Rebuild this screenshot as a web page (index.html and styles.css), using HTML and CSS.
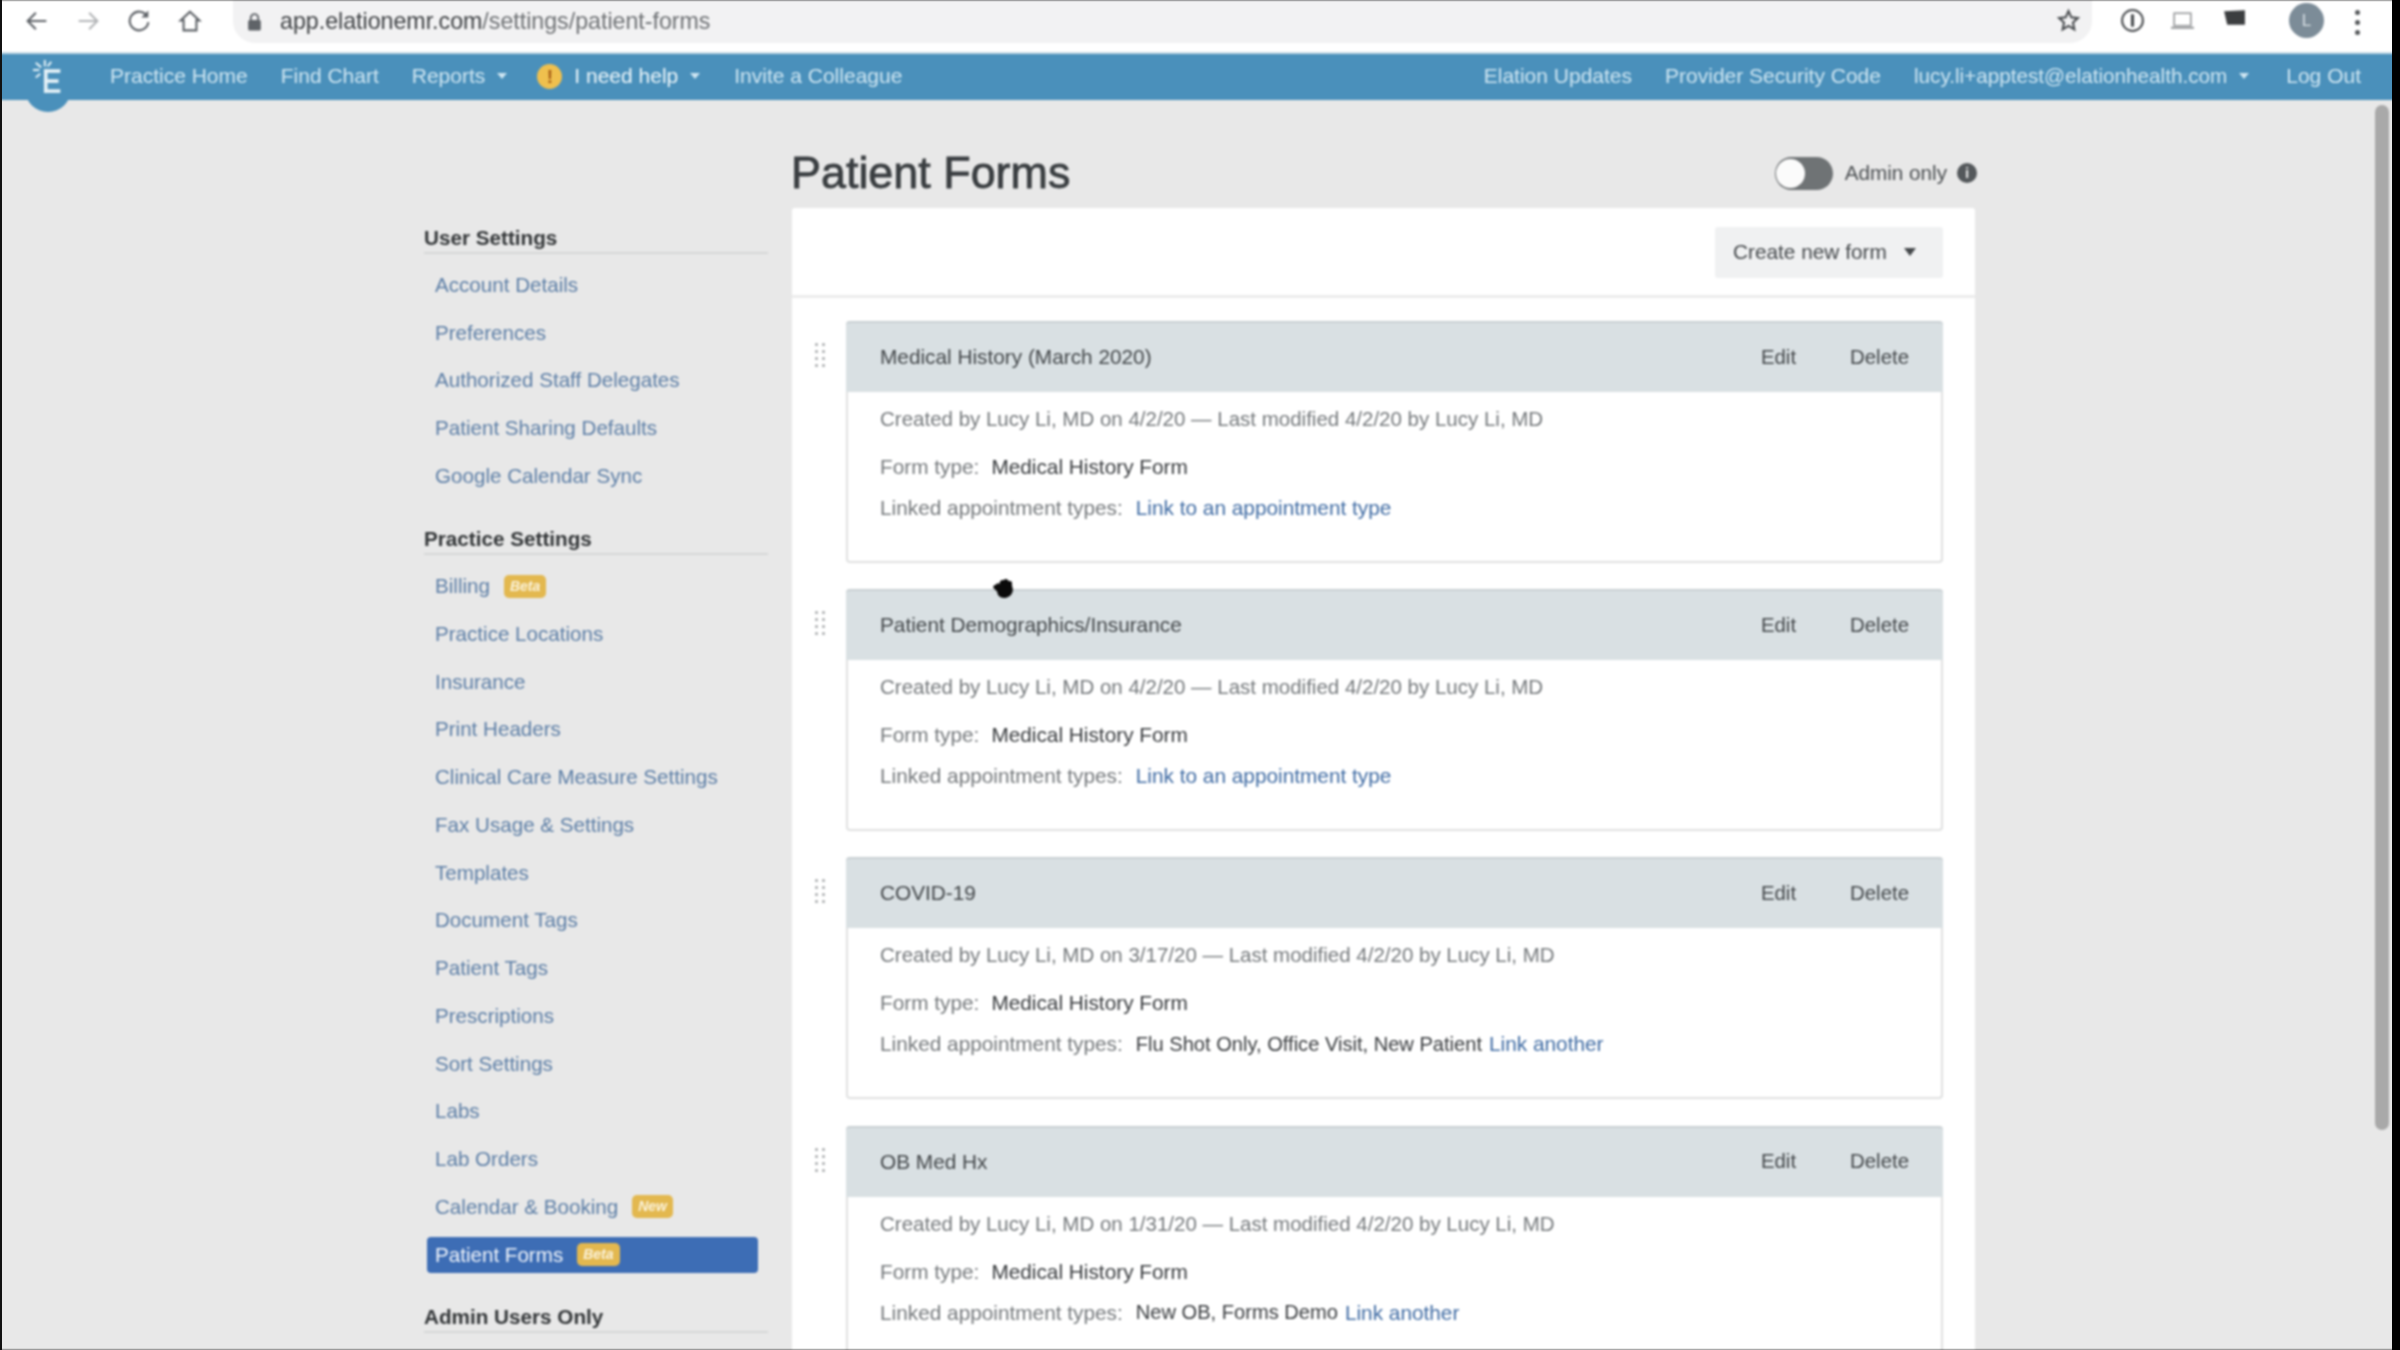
FILE: index.html
```html
<!DOCTYPE html>
<html lang="en">
<head>
<meta charset="utf-8">
<title>Patient Forms</title>
<link rel="stylesheet" href="styles.css">
</head>
<body>
<div class="screen">
  <header class="toolbar">
    <div class="tb-nav">
      <svg class="tb-ico" viewBox="0 0 24 24"><path d="M20 12H5M11 5l-7 7 7 7" fill="none" stroke="#5f6368" stroke-width="1.800"/></svg>
      <svg class="tb-ico" viewBox="0 0 24 24"><path d="M4 12h15M13 5l7 7-7 7" fill="none" stroke="#b4b6b8" stroke-width="1.800"/></svg>
      <svg class="tb-ico" viewBox="0 0 24 24"><path d="M19 8a8 8 0 1 0 1 5" fill="none" stroke="#5f6368" stroke-width="1.800"/><path d="M20 3v6h-6z" fill="#5f6368"/></svg>
      <svg class="tb-ico" viewBox="0 0 24 24"><path d="M12 4l8 7.500h-2.500V20h-11v-8.500H4z" fill="none" stroke="#5f6368" stroke-width="1.800"/></svg>
    </div>
    <div class="omnibox">
      <svg class="lock" viewBox="0 0 14 18"><path d="M3.500 8V5.500a3.500 3.500 0 0 1 7 0V8" fill="none" stroke="#5f6368" stroke-width="1.800"/><rect x="1" y="7.500" width="12" height="10" rx="1.500" fill="#5f6368"/></svg>
      <span class="host">app.elationemr.com</span><span class="path">/settings/patient-forms</span>
    </div>
    <div class="tb-right">
      <svg class="ext star" viewBox="0 0 24 24"><path d="M12 3l2.700 6 6.300.7-4.700 4.300 1.300 6.500L12 17.200 6.400 20.500 7.700 14 3 9.700 9.300 9z" fill="none" stroke="#4a4d50" stroke-width="2"/></svg>
      <svg class="ext onep" viewBox="0 0 24 24"><circle cx="12" cy="12" r="10" fill="none" stroke="#4a4d50" stroke-width="2"/><rect x="10.500" y="6" width="3" height="12" rx="1" fill="#4a4d50"/></svg>
      <svg class="ext laptop" viewBox="0 0 24 24"><rect x="4" y="5" width="16" height="12" fill="none" stroke="#9a9c9e" stroke-width="1.600"/><rect x="1" y="18" width="22" height="2" fill="#9a9c9e"/></svg>
      <svg class="ext wallet" viewBox="0 0 24 24"><path d="M2 5l20-1v14H5z" fill="#3c3e40"/></svg>
      <span class="avatar">L</span>
      <span class="dots"><i></i><i></i><i></i></span>
    </div>
  </header>

  <nav class="navbar">
    <span class="logo-bump"></span>
    <svg class="logo" viewBox="0 0 34 40">
      <g stroke="#e4f1f7" stroke-width="2.200"><path d="M13 2v7M3 5l6 5M0 13h7M3 21l5-4M20 4l-4 5"/></g>
      <g fill="#e4f1f7"><rect x="12" y="12" width="4" height="26"/><rect x="12" y="12" width="18" height="4"/><rect x="12" y="23" width="16" height="4"/><rect x="12" y="34" width="18" height="4"/></g>
    </svg>
    <div class="nav-left">
      <a class="nav-link">Practice Home</a>
      <a class="nav-link">Find Chart</a>
      <a class="nav-link">Reports<span class="caret"></span></a>
      <a class="nav-link help"><span class="alert">!</span>I need help<span class="caret"></span></a>
      <a class="nav-link">Invite a Colleague</a>
    </div>
    <div class="nav-right">
      <a class="nav-link">Elation Updates</a>
      <a class="nav-link">Provider Security Code</a>
      <a class="nav-link email">lucy.li+apptest@elationhealth.com<span class="caret"></span></a>
      <a class="nav-link">Log Out</a>
    </div>
  </nav>

  <main class="main">
    <aside class="sidebar">
      <h3 class="side-head">User Settings</h3>
      <ul class="side-list">
        <li><a>Account Details</a></li>
        <li><a>Preferences</a></li>
        <li><a>Authorized Staff Delegates</a></li>
        <li><a>Patient Sharing Defaults</a></li>
        <li><a>Google Calendar Sync</a></li>
      </ul>
      <h3 class="side-head">Practice Settings</h3>
      <ul class="side-list practice">
        <li><a>Billing</a><span class="badge">Beta</span></li>
        <li><a>Practice Locations</a></li>
        <li><a>Insurance</a></li>
        <li><a>Print Headers</a></li>
        <li><a>Clinical Care Measure Settings</a></li>
        <li><a>Fax Usage &amp; Settings</a></li>
        <li><a>Templates</a></li>
        <li><a>Document Tags</a></li>
        <li><a>Patient Tags</a></li>
        <li><a>Prescriptions</a></li>
        <li><a>Sort Settings</a></li>
        <li><a>Labs</a></li>
        <li><a>Lab Orders</a></li>
        <li><a>Calendar &amp; Booking</a><span class="badge">New</span></li>
        <li class="active"><a>Patient Forms</a><span class="badge">Beta</span></li>
      </ul>
      <h3 class="side-head">Admin Users Only</h3>
    </aside>

    <section class="content">
      <div class="title-row">
        <h1 class="title">Patient Forms</h1>
        <div class="admin">
          <span class="toggle"><span class="knob"></span></span>
          <span class="admin-label">Admin only</span>
          <span class="info">i</span>
        </div>
      </div>
      <div class="panel">
        <div class="panel-top">
          <button class="create">Create new form<span class="caret dark"></span></button>
        </div>
        <div class="cards">
          <div class="row">
            <span class="grip"><i></i><i></i><i></i><i></i><i></i><i></i><i></i><i></i></span>
            <article class="card">
              <div class="card-head"><span class="card-name">Medical History (March 2020)</span><a class="act edit">Edit</a><a class="act">Delete</a></div>
              <div class="card-body">
                <p class="meta">Created by Lucy Li, MD on 4/2/20 — Last modified 4/2/20 by Lucy Li, MD</p>
                <p class="line one"><span class="lbl">Form type:</span><span class="val">Medical History Form</span></p>
                <p class="line"><span class="lbl">Linked appointment types:</span><a class="lnk">Link to an appointment type</a></p>
              </div>
            </article>
          </div>
          <div class="row">
            <span class="grip"><i></i><i></i><i></i><i></i><i></i><i></i><i></i><i></i></span>
            <article class="card">
              <div class="card-head"><span class="card-name">Patient Demographics/Insurance</span><a class="act edit">Edit</a><a class="act">Delete</a></div>
              <div class="card-body">
                <p class="meta">Created by Lucy Li, MD on 4/2/20 — Last modified 4/2/20 by Lucy Li, MD</p>
                <p class="line one"><span class="lbl">Form type:</span><span class="val">Medical History Form</span></p>
                <p class="line"><span class="lbl">Linked appointment types:</span><a class="lnk">Link to an appointment type</a></p>
              </div>
            </article>
          </div>
          <div class="row">
            <span class="grip"><i></i><i></i><i></i><i></i><i></i><i></i><i></i><i></i></span>
            <article class="card">
              <div class="card-head"><span class="card-name">COVID-19</span><a class="act edit">Edit</a><a class="act">Delete</a></div>
              <div class="card-body">
                <p class="meta">Created by Lucy Li, MD on 3/17/20 — Last modified 4/2/20 by Lucy Li, MD</p>
                <p class="line one"><span class="lbl">Form type:</span><span class="val">Medical History Form</span></p>
                <p class="line"><span class="lbl">Linked appointment types:</span><span class="val narrow">Flu Shot Only, Office Visit, New Patient</span><a class="lnk tight">Link another</a></p>
              </div>
            </article>
          </div>
          <div class="row">
            <span class="grip"><i></i><i></i><i></i><i></i><i></i><i></i><i></i><i></i></span>
            <article class="card">
              <div class="card-head"><span class="card-name">OB Med Hx</span><a class="act edit">Edit</a><a class="act">Delete</a></div>
              <div class="card-body">
                <p class="meta">Created by Lucy Li, MD on 1/31/20 — Last modified 4/2/20 by Lucy Li, MD</p>
                <p class="line one"><span class="lbl">Form type:</span><span class="val">Medical History Form</span></p>
                <p class="line"><span class="lbl">Linked appointment types:</span><span class="val narrow">New OB, Forms Demo</span><a class="lnk tight">Link another</a></p>
              </div>
            </article>
          </div>
        </div>
      </div>
    </section>
  </main>

  <span class="scroll-thumb"></span>
  <svg class="hand" viewBox="0 0 24 24"><path d="M5 9c1-2 3-1 3 0 0-3 2-5 4-4 2-2 4-1 5 1 2-1 4 1 3 3l1 5c0 4-3 8-8 8-5 0-7-3-7-6L2 12c0-2 2-3 3-3z" fill="#0a0a0a"/></svg>
</div>
<div class="edge-left"></div>
<div class="edge-right"></div>
</body>
</html>
```

FILE: styles.css
```css
* { box-sizing: border-box; }
html, body { margin: 0; padding: 0; height: 100%; overflow: hidden; background: #000; }
body { font-family: "Liberation Sans", Arial, sans-serif; }

.screen {
  position: relative;
  width: 2400px;
  height: 1350px;
  overflow: hidden;
  display: flex;
  flex-direction: column;
  background: #e8e8e8;
  filter: blur(0.9px);
}
.edge-left { position: fixed; left: 0; top: 0; width: 2px; height: 1350px; background: #111; }
.edge-right { position: fixed; right: 0; top: 0; width: 8px; height: 1350px; background: #000; }

/* browser chrome */
.toolbar { height: 52px; flex: none; display: flex; align-items: flex-start; background: #fff; position: relative; }
.tb-nav { display: flex; gap: 23px; padding: 7px 0 0 23px; width: 233px; flex: none; }
.tb-ico { width: 28px; height: 28px; flex: none; }
.omnibox {
  width: 1859px; height: 43px; flex: none;
  background: #f2f2f3;
  border-radius: 0 0 22px 22px;
  display: flex; align-items: center;
  padding-left: 14px;
  padding-bottom: 1px;
  font-size: 23.200px;
}
.lock { width: 15px; height: 19px; margin-right: 18px; flex: none; }
.host { color: #3c3f42; }
.path { color: #6e7174; }
.tb-right { flex: 1; position: relative; height: 43px; }
.ext { position: absolute; width: 25px; height: 25px; top: 8px; }
.star { left: -36px; }
.onep { left: 28px; }
.laptop { left: 78px; }
.wallet { left: 130px; top: 6px; }
.avatar {
  position: absolute; left: 197px; top: 3px;
  width: 35px; height: 35px; border-radius: 50%;
  background: #7c8c98; color: #d8dfe4;
  font-size: 17px; line-height: 35px; text-align: center;
}
.dots { position: absolute; left: 263px; top: 10px; display: flex; flex-direction: column; gap: 5px; }
.dots i { width: 5px; height: 5px; border-radius: 50%; background: #55585b; display: block; }

/* nav bar */
.navbar {
  position: relative; flex: none; height: 48px;
  background: #4a90bb;
  border-top: 2px solid #c5d9e5;
  display: flex; align-items: center; justify-content: space-between;
  padding: 0 39px 2px 110px;
  font-size: 21px;
  color: #cfe6f2;
}
.logo-bump { position: absolute; left: 25px; top: 30px; width: 46px; height: 28px; border-radius: 0 0 23px 23px; background: #4a90bb; }
.logo { position: absolute; left: 33px; top: 4px; width: 31px; height: 37px; }
.nav-left, .nav-right { display: flex; align-items: center; gap: 33px; position: relative; }
.nav-link { display: flex; align-items: center; white-space: nowrap; }
.email { font-size: 20.700px; margin-right: 4px; }
.help { color: #eef7fb; margin-left: -3px; margin-right: 1px; }
.alert {
  width: 25px; height: 25px; border-radius: 50%;
  background: #efc04e; color: #a85f18;
  font-weight: bold; font-size: 19px; line-height: 25px; text-align: center;
  margin-right: 12px;
}
.caret { width: 0; height: 0; margin-left: 12px; border-left: 5px solid transparent; border-right: 5px solid transparent; border-top: 6px solid #cfe6f2; }
.caret.dark { border-left-width: 6px; border-right-width: 6px; border-top: 8px solid #44484b; margin-left: 17px; }

/* main */
.main { flex: 1; min-height: 0; display: flex; align-items: flex-start; padding-left: 424px; }
.sidebar { width: 344px; flex: none; margin-right: 24px; padding-top: 126px; }
.side-head {
  margin: 0; font-size: 20.700px; font-weight: bold; color: #333638;
  height: 28px; line-height: 24px;
  border-bottom: 2px solid #d6d7d7;
  white-space: nowrap;
}
.side-list { list-style: none; margin: 0 0 27.500px; padding: 7px 10px 0 3px; }
.side-list.practice { margin-bottom: 32px; padding-top: 7px; }
.side-list li {
  height: 47.750px; display: flex; align-items: center;
  padding-left: 8px; border-radius: 4px; font-size: 20.600px; color: #5c7ea6;
}
.side-list li.active {
  height: 36px; margin: 6px 0 5.750px; background: #3d6db5; color: #f1f5fb;
}
.badge {
  margin-left: 14px; padding: 0 6px; height: 23px;
  border-radius: 5px; background: #e3b84f; color: #fbf3dc;
  font-size: 14px; font-weight: bold; font-style: italic; line-height: 23px;
}

.content { width: 1183px; flex: none; }
.title-row { height: 108px; display: flex; align-items: center; justify-content: space-between; padding-top: 38px; }
.title { margin: 0 0 0 -1px; font-size: 44.900px; font-weight: normal; color: #3a3e41; -webkit-text-stroke: 0.8px #3a3e41; }
.admin { display: flex; align-items: center; font-size: 20.700px; color: #4a4e51; margin-right: -2px; }
.toggle { width: 58px; height: 33px; border-radius: 17px; background: #6f7375; position: relative; margin-right: 12px; }
.knob { position: absolute; left: 1px; top: 2px; width: 29px; height: 29px; border-radius: 50%; background: #fbfbfb; }
.admin-label { margin-right: 10px; }
.info { width: 20px; height: 20px; border-radius: 50%; background: #54585b; color: #e8e8e8; font-size: 15px; font-weight: bold; line-height: 20px; text-align: center; }

.panel { background: #fff; border-radius: 3px; height: 1200px; }
.panel-top { height: 90px; border-bottom: 3px solid #ececec; padding: 19px 32px 0 0; display: flex; justify-content: flex-end; align-items: flex-start; }
.create {
  width: 228px; height: 51px; border: 0; border-radius: 3px; background: #f0f1f2;
  font: inherit; font-size: 20.800px; color: #44484b;
  display: flex; align-items: center; justify-content: flex-start;
  padding: 0 0 2px 18px;
}
.cards { padding: 23px 32px 0 0; display: flex; flex-direction: column; gap: 26.200px; }
.row { display: flex; align-items: flex-start; }
.grip { width: 54px; flex: none; display: grid; grid-template-columns: 3px 3px; gap: 4px 4px; justify-content: center; padding: 22px 0 0 2px; }
.grip i { width: 3px; height: 3px; border-radius: 50%; background: #a5a8aa; display: block; }
.card { flex: 1; height: 242px; border: 2px solid #e0e1e1; border-top: 0; border-radius: 4px; font-size: 20.800px; background: #fff; }
.card-head {
  height: 71px; margin: 0 -2px; background: #d9e0e3;
  border-top: 2px solid #c9d0d3; border-radius: 4px 4px 0 0;
  display: flex; align-items: center; padding: 0 34px 1px;
  color: #43474a;
}
.card-name { flex: 1; }
.act { font-size: 20.400px; }
.edit { margin-right: 54px; }
.card-body { padding: 10px 32px 0; }
.card-body p { margin: 0; display: flex; align-items: center; height: 34px; white-space: nowrap; }
.meta { color: #75797c; font-size: 20.500px; }
.card-body .line { margin-top: 7px; }
.card-body .line.one { margin-top: 14px; }
.lbl { color: #75797c; margin-right: 13px; }
.line.one .lbl { margin-right: 12px; }
.val { color: #383b3e; }
.val.narrow { font-size: 20.100px; }
.lnk { color: #3f6ba3; }
.tight { margin-left: 7px; }

.scroll-thumb { position: absolute; left: 2375px; top: 105px; width: 14px; height: 1025px; border-radius: 7px; background: #a9a9a9; }
.hand { position: absolute; left: 991px; top: 575px; width: 25px; height: 25px; }
```
